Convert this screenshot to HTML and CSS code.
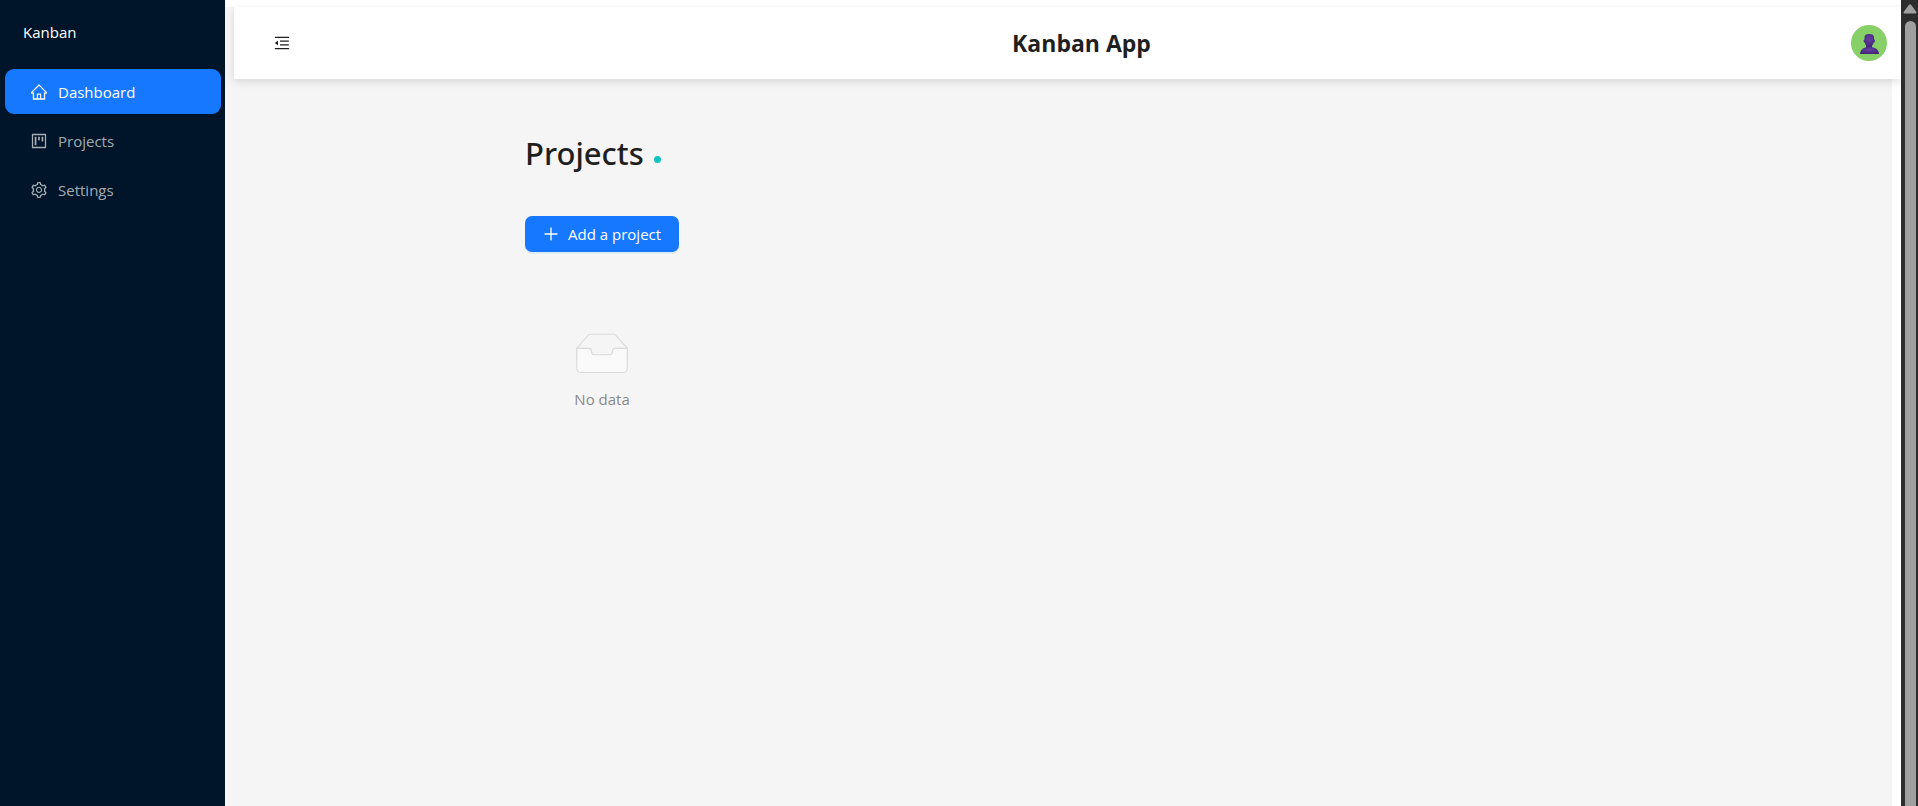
FILE: index.html
```html
<!DOCTYPE html>
<html lang="en">
<head>
<meta charset="utf-8">
<title>Kanban App</title>
<link rel="stylesheet" href="styles.css">
</head>
<body>
<div class="app">
  <aside class="sidebar">
    <div class="brand">Kanban</div>
    <nav class="menu">
      <a class="menu-item active" href="#dashboard">
        <svg class="icon" viewBox="64 64 896 896" aria-hidden="true"><path d="M946.5 505L560.1 118.8l-25.9-25.9a31.5 31.5 0 00-44.4 0L77.5 505a63.9 63.9 0 00-18.8 46c.4 35.2 29.7 63.3 64.9 63.3h42.5V940h691.8V614.3h43.4c17.1 0 33.2-6.7 45.3-18.8a63.6 63.6 0 0018.7-45.3c0-17-6.7-33.1-18.8-45.2zM568 868H456V664h112v204zm217.9-325.7V868H632V640c0-22.1-17.9-40-40-40H432c-22.1 0-40 17.9-40 40v228H238.1V542.3h-96l370-369.7 23.1 23.1L882 542.3h-96.1z"/></svg>
        <span>Dashboard</span>
      </a>
      <a class="menu-item" href="#projects">
        <svg class="icon" viewBox="64 64 896 896" aria-hidden="true"><path d="M280 752h80c4.400 0 8-3.600 8-8V280c0-4.400-3.600-8-8-8h-80c-4.400 0-8 3.600-8 8v464c0 4.400 3.600 8 8 8zm192-280h80c4.400 0 8-3.600 8-8V280c0-4.400-3.600-8-8-8h-80c-4.400 0-8 3.600-8 8v184c0 4.400 3.600 8 8 8zm192 72h80c4.400 0 8-3.600 8-8V280c0-4.400-3.600-8-8-8h-80c-4.400 0-8 3.600-8 8v256c0 4.400 3.600 8 8 8zm216-432H144c-17.700 0-32 14.300-32 32v736c0 17.700 14.300 32 32 32h736c17.700 0 32-14.300 32-32V144c0-17.700-14.300-32-32-32zm-40 728H184V184h656v656z"/></svg>
        <span>Projects</span>
      </a>
      <a class="menu-item" href="#settings">
        <svg class="icon" viewBox="64 64 896 896" aria-hidden="true"><path d="M924.8 625.700l-65.500-56c3.100-19 4.700-38.400 4.700-57.800s-1.600-38.800-4.700-57.800l65.500-56a32.030 32.030 0 009.300-35.200l-.9-2.600a443.740 443.740 0 00-79.700-137.900l-1.800-2.100a32.120 32.120 0 00-35.100-9.500l-81.300 28.900c-30-24.600-63.500-44-99.700-57.600l-15.700-85a32.050 32.050 0 00-25.800-25.700l-2.700-.5c-52.100-9.400-106.900-9.400-159 0l-2.700.5a32.050 32.050 0 00-25.800 25.700l-15.800 85.400a351.860 351.860 0 00-99 57.400l-81.900-29.100a32 32 0 00-35.100 9.500l-1.800 2.100a446.020 446.020 0 00-79.700 137.900l-.9 2.600c-4.500 12.500-.8 26.500 9.300 35.200l66.300 56.600c-3.100 18.800-4.600 38-4.600 57.100 0 19.200 1.500 38.400 4.600 57.100L99 625.500a32.030 32.030 0 00-9.300 35.200l.9 2.600c18.100 50.400 44.900 96.900 79.700 137.900l1.800 2.100a32.120 32.120 0 0035.100 9.500l81.900-29.100c29.800 24.500 63.100 43.900 99 57.400l15.800 85.400a32.050 32.050 0 0025.800 25.700l2.700.5a449.400 449.400 0 00159 0l2.700-.5a32.050 32.050 0 0025.800-25.700l15.700-85a350 350 0 0099.700-57.600l81.300 28.900a32 32 0 0035.100-9.500l1.800-2.100c34.800-41.100 61.600-87.500 79.700-137.900l.9-2.600c4.500-12.300.8-26.300-9.300-35zM788.300 465.900c2.500 15.100 3.800 30.600 3.800 46.100s-1.300 31-3.800 46.100l-6.600 40.100 74.700 63.900a370.030 370.030 0 01-42.600 73.600L721 702.800l-31.400 25.800c-23.900 19.600-50.500 35-79.300 45.800l-38.100 14.300-17.900 97a377.500 377.500 0 01-85 0l-17.900-97.200-37.800-14.500c-28.500-10.800-55-26.200-78.700-45.700l-31.400-25.900-93.400 33.200c-17-22.900-31.200-47.600-42.600-73.600l75.500-64.500-6.500-40c-2.400-14.900-3.700-30.300-3.700-45.500 0-15.300 1.200-30.600 3.700-45.500l6.500-40-75.500-64.500c11.300-26.100 25.600-50.700 42.600-73.600l93.400 33.200 31.400-25.900c23.700-19.500 50.200-34.900 78.700-45.700l37.900-14.300 17.900-97.200c28.100-3.200 56.800-3.200 85 0l17.900 97 38.100 14.300c28.700 10.800 55.400 26.200 79.300 45.800l31.400 25.800 92.800-32.900c17 22.900 31.200 47.600 42.600 73.600L781.800 426l6.500 39.900zM512 326c-97.200 0-176 78.800-176 176s78.800 176 176 176 176-78.800 176-176-78.800-176-176-176zm79.200 255.200A111.600 111.600 0 01512 614c-29.900 0-58-11.700-79.200-32.800A111.600 111.600 0 01400 502c0-29.900 11.700-58 32.800-79.200C454 401.600 482.100 390 512 390c29.900 0 58 11.600 79.200 32.800A111.600 111.600 0 01624 502c0 29.900-11.700 58-32.800 79.200z"/></svg>
        <span>Settings</span>
      </a>
    </nav>
  </aside>

  <div class="layout">
    <header class="header">
      <button class="fold" type="button" aria-label="Collapse menu">
        <svg class="icon" viewBox="64 64 896 896" aria-hidden="true"><path d="M408 442h480c4.400 0 8-3.600 8-8v-56c0-4.400-3.600-8-8-8H408c-4.400 0-8 3.600-8 8v56c0 4.400 3.600 8 8 8zm-8 204c0 4.400 3.600 8 8 8h480c4.400 0 8-3.600 8-8v-56c0-4.400-3.600-8-8-8H408c-4.400 0-8 3.600-8 8v56zm504-486H120c-4.400 0-8 3.600-8 8v56c0 4.400 3.600 8 8 8h784c4.400 0 8-3.600 8-8v-56c0-4.400-3.600-8-8-8zm0 632H120c-4.400 0-8 3.600-8 8v56c0 4.400 3.600 8 8 8h784c4.400 0 8-3.600 8-8v-56c0-4.400-3.600-8-8-8zM115.400 518.900L271.700 642c5.800 4.600 14.400.5 14.400-6.900V388.900c0-7.400-8.500-11.500-14.400-6.900L115.400 505.100a8.740 8.740 0 000 13.800z"/></svg>
      </button>
      <h1 class="title">Kanban App</h1>
      <button class="avatar" type="button" aria-label="Account">
        <svg class="avatar-icon" viewBox="0 0 36 36" aria-hidden="true">
          <defs>
            <radialGradient id="bust" cx="50%" cy="40%" r="65%"><stop offset="0" stop-color="#653fa3"/><stop offset="1" stop-color="#3f2374"/></radialGradient>
          </defs>
          <path fill="#46277c" d="M15 18h6v5h-6z"/>
          <path fill="url(#bust)" d="M13.500 12.500c0-2.500 1.500-3.500 4.700-3.500s4.800 1 4.800 3.500v2c.9 0 1 .7.9 1.500-.1.900-.5 1.500-1.200 1.500-.6 2.600-2.200 4.500-4.500 4.500s-3.900-1.900-4.500-4.500c-.7 0-1-.6-1.100-1.500-.1-.8.100-1.500.9-1.500z"/>
          <path fill="url(#bust)" d="M9 29c.3-4.500 3.500-7 9.400-7s9.200 2.500 9.600 7z"/>
        </svg>
      </button>
    </header>

    <main class="content">
      <h2 class="heading">Projects <span class="dot"></span></h2>
      <div class="projects">
        <button class="add" type="button">
          <svg class="icon" viewBox="64 64 896 896" aria-hidden="true"><path d="M482 152h60q8 0 8 8v704q0 8-8 8h-60q-8 0-8-8V160q0-8 8-8z"/><path d="M192 474h672q8 0 8 8v60q0 8-8 8H160q-8 0-8-8v-60q0-8 8-8z"/></svg>
          <span>Add a project</span>
        </button>
        <div class="empty">
          <svg class="empty-image" viewBox="0 0 64 41" aria-hidden="true">
            <g transform="translate(0 1)" fill="none" fill-rule="evenodd">
              <ellipse fill="#f5f5f5" cx="32" cy="33" rx="32" ry="7"/>
              <g stroke="#d9d9d9">
                <path d="M55 12.760L44.854 1.258C44.367.474 43.656 0 42.907 0H21.093c-.749 0-1.460.474-1.947 1.257L9 12.761V22h46v-9.240z"/>
                <path fill="#fafafa" d="M41.613 15.931c0-1.605.994-2.930 2.227-2.931H55v18.137C55 33.260 53.680 35 52.050 35h-40.100C10.320 35 9 33.259 9 31.137V13h11.160c1.233 0 2.227 1.323 2.227 2.928v.022c0 1.605 1.005 2.901 2.237 2.901h14.752c1.232 0 2.237-1.308 2.237-2.913v-.007z"/>
              </g>
            </g>
          </svg>
          <p class="empty-text">No data</p>
        </div>
      </div>
    </main>
  </div>

  <div class="scrollbar" aria-hidden="true">
    <svg class="scroll-arrow" viewBox="0 0 14 10"><path fill="#9f9f9f" d="M6 .8q1-1.300 2 0l5.200 7q.8 1.700-.8 1.700H1.600q-1.600 0-.8-1.700z"/></svg>
    <div class="thumb"></div>
  </div>
</div>
</body>
</html>
```

FILE: styles.css
```css
* {
  box-sizing: border-box;
}

body {
  margin: 0;
  background: #fff;
  color: #1f1f1f;
  font-family: "Open Sans", "Noto Sans", sans-serif;
  font-size: 15px;
  line-height: 24px;
}

button {
  border: 0;
  padding: 0;
  font: inherit;
  cursor: pointer;
}

.app {
  display: flex;
  min-height: 100vh;
}

.icon {
  width: 16px;
  height: 16px;
  fill: currentColor;
}

.sidebar {
  flex: none;
  width: 225px;
  background: #001529;
}

.brand {
  padding: 20px 23px;
  color: #fff;
}

.menu {
  display: flex;
  flex-direction: column;
  gap: 4px;
  padding: 5px 4px 5px 5px;
}

.menu-item {
  display: flex;
  align-items: center;
  gap: 11px;
  height: 45px;
  padding: 0 26px;
  border-radius: 9px;
  color: rgba(255, 255, 255, 0.65);
  text-decoration: none;
}

.menu-item.active {
  background: #1677ff;
  color: #fff;
}

.layout {
  flex: 1;
  margin: 7px 9px 0 0;
  background: #f5f5f5;
}

.header {
  display: flex;
  align-items: center;
  justify-content: space-between;
  height: 72px;
  margin: 0 -9px 0 9px;
  padding: 0 14px 0 18px;
  background: #fff;
  box-shadow: 0 3px 8px rgba(0, 0, 0, 0.12);
}

.fold {
  display: flex;
  align-items: center;
  justify-content: center;
  width: 60px;
  height: 60px;
  background: none;
  color: #1f1f1f;
}

.title {
  margin: 0;
  font-size: 23px;
  font-weight: 700;
  line-height: 32px;
}

.avatar {
  width: 36px;
  height: 36px;
  border-radius: 50%;
  background: #87d068;
}

.avatar-icon {
  display: block;
  width: 36px;
  height: 36px;
}

.content {
  padding: 50px 18%;
}

.heading {
  display: flex;
  align-items: center;
  gap: 10px;
  margin: 0;
  font-family: "Noto Sans", "Open Sans", sans-serif;
  font-size: 31px;
  font-weight: 500;
  line-height: 48px;
}

.dot {
  width: 7px;
  height: 7px;
  margin-top: 12px;
  border-radius: 50%;
  background: #13c2c2;
}

.projects {
  display: inline-flex;
  flex-direction: column;
  margin-top: 39px;
}

.add {
  display: flex;
  align-items: center;
  gap: 9px;
  height: 36px;
  padding: 0 18px;
  border-radius: 7px;
  background: #1677ff;
  box-shadow: 0 2px 0 rgba(5, 145, 255, 0.1);
  color: #fff;
}

.empty {
  display: flex;
  flex-direction: column;
  align-items: center;
  gap: 9px;
  margin-top: 81px;
}

.empty-image {
  width: 70px;
  height: 45px;
}

.empty-text {
  margin: 0;
  color: #8a8a8a;
}

.scrollbar {
  display: flex;
  flex: none;
  flex-direction: column;
  align-items: center;
  gap: 7px;
  width: 17px;
  padding: 4px 1px 0 2px;
  background: #2c2c2c;
}

.scroll-arrow {
  width: 14px;
  height: 10px;
}

.thumb {
  flex: 1;
  width: 11px;
  border-radius: 6px 6px 0 0;
  background: #9f9f9f;
}
```
